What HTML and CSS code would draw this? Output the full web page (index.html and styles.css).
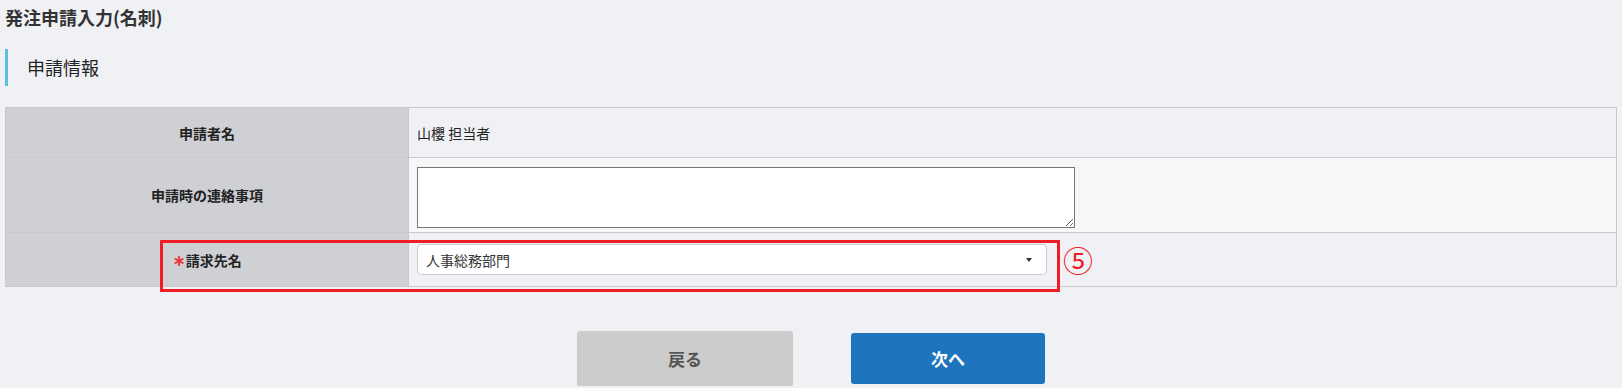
FILE: index.html
```html
<!DOCTYPE html>
<html lang="ja">
<head>
    <meta charset="UTF-8">
    <title>発注申請入力(名刺)</title>
    <link rel="stylesheet" href="styles.css">
</head>
<body>
    <h1 class="page-title">発注申請入力(名刺)</h1>

    <h2 class="section-title">申請情報</h2>

    <div class="form-wrap">
        <table class="form-table">
            <tr class="row-name">
                <th>申請者名</th>
                <td>山櫻 担当者</td>
            </tr>
            <tr class="row-note">
                <th>申請時の連絡事項</th>
                <td><textarea class="note-input"></textarea></td>
            </tr>
            <tr class="row-billing">
                <th><span class="required">∗</span>請求先名</th>
                <td>
                    <div class="field-line">
                        <div class="select-box">
                            <select>
                                <option>人事総務部門</option>
                            </select>
                        </div>
                        <span class="marker">⑤</span>
                    </div>
                </td>
            </tr>
        </table>
        <div class="highlight"></div>
    </div>

    <div class="actions">
        <button class="btn btn-back">戻る</button>
        <button class="btn btn-next">次へ</button>
    </div>
</body>
</html>
```

FILE: styles.css
```css
body {
    margin: 0;
    padding: 5px 5px 0;
    background-color: #f0f1f5;
    font-family: "Noto Sans CJK JP", "Noto Sans", sans-serif;
    color: #222;
}
.page-title {
    margin: 0;
    font-size: 18px;
    line-height: 24px;
    font-weight: bold;
    color: #333;
}
.section-title {
    margin: 20px 0 21px;
    height: 37px;
    line-height: 37px;
    padding-left: 19px;
    border-left: 3px solid #5bc0de;
    font-size: 18px;
    font-weight: normal;
}
.form-wrap {
    position: relative;
}
.form-table {
    width: 100%;
    border-collapse: collapse;
    table-layout: fixed;
    font-size: 14px;
}
.form-table th,
.form-table td {
    border: 1px solid #c8c9cc;
    padding: 0 8px;
}
.form-table th {
    width: 386px;
    background-color: #cfd0d3;
    font-weight: bold;
    text-align: center;
}
.form-table td {
    background-color: #f0f1f5;
}
.row-name th, .row-name td {
    height: 49px;
}
.row-note th, .row-note td {
    height: 74px;
}
.row-note td {
    background-color: #f7f7f7;
}
.row-billing th, .row-billing td {
    height: 53px;
}
.note-input {
    display: block;
    width: 658px;
    height: 61px;
    margin-top: 4px;
    box-sizing: border-box;
    border: 1px solid #767676;
    background: #fff;
    resize: both;
}
.required {
    font-family: "DejaVu Sans", sans-serif;
    font-size: 16px;
    line-height: 1;
    font-weight: bold;
    color: #e8383d;
}
.field-line {
    display: flex;
    align-items: center;
    height: 31px;
}
.select-box {
    position: relative;
    width: 630px;
}
.select-box select {
    width: 100%;
    height: 31px;
    padding: 0 8px;
    border: 1px solid #ccc;
    border-radius: 4px;
    background: #fff;
    font-family: inherit;
    font-size: 14px;
    color: #333;
    appearance: none;
}
.select-box::after {
    content: "";
    position: absolute;
    right: 15px;
    top: 14px;
    border-left: 3px solid transparent;
    border-right: 3px solid transparent;
    border-top: 4px solid #333;
}
.marker {
    margin-left: 16px;
    font-size: 30px;
    line-height: 31px;
    color: #ee1c25;
}
.highlight {
    position: absolute;
    left: 155px;
    top: 133px;
    width: 900px;
    height: 52px;
    box-sizing: border-box;
    border: 3px solid #ee1c25;
}
.actions {
    display: flex;
    justify-content: center;
    align-items: center;
    gap: 58px;
    margin-top: 44px;
}
.btn {
    border: none;
    border-radius: 3px;
    font-family: inherit;
    font-size: 17px;
    font-weight: bold;
}
.btn-back {
    width: 216px;
    height: 55px;
    background-color: #cccccc;
    color: #555;
    box-shadow: 0 1px 1px rgba(0, 0, 0, 0.1);
}
.btn-next {
    width: 194px;
    height: 51px;
    background-color: #1e74bd;
    color: #fff;
}
```
